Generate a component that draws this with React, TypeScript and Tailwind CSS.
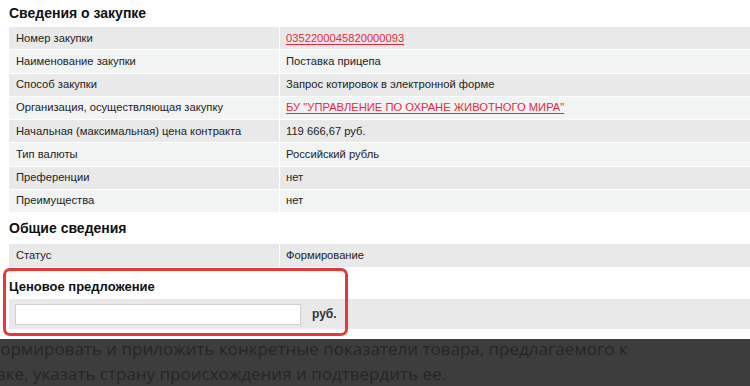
import React from "react";

const rows: { k: string; v: string; link?: boolean }[] = [
  { k: "Номер закупки", v: "0352200045820000093", link: true },
  { k: "Наименование закупки", v: "Поставка прицепа" },
  { k: "Способ закупки", v: "Запрос котировок в электронной форме" },
  { k: "Организация, осуществляющая закупку", v: "БУ \"УПРАВЛЕНИЕ ПО ОХРАНЕ ЖИВОТНОГО МИРА\"", link: true },
  { k: "Начальная (максимальная) цена контракта", v: "119 666,67 руб." },
  { k: "Тип валюты", v: "Российский рубль" },
  { k: "Преференции", v: "нет" },
  { k: "Преимущества", v: "нет" },
];

function Row({ k, v, link, i }: { k: string; v: string; link?: boolean; i: number }) {
  const bg = i % 2 === 0 ? "bg-[#e9e9e9]" : "bg-[#f2f3f3]";
  return (
    <div className="flex h-[22.25px] gap-px">
      <div className={`w-[270px] shrink-0 ${bg} flex items-center pl-[7px] text-[11.2px] text-[#222]`}>{k}</div>
      <div className={`flex-1 ${bg} flex items-center pl-[6px] text-[11.2px] text-[#222]`}>
        {link ? <span className="text-[#e8283c] underline underline-offset-2 decoration-[#e8283c]">{v}</span> : v}
      </div>
    </div>
  );
}

export default function App() {
  return (
    <div className="relative w-[750px] h-[386px] overflow-hidden bg-white" style={{ fontFamily: "'Liberation Sans', Arial, sans-serif" }}>
      <div className="pl-[9px]">
        <h2 className="h-[27px] pt-[3px] text-[14px] font-bold text-[#111]">Сведения о закупке</h2>
        <div className="flex flex-col gap-px">
          {rows.map((r, i) => (
            <Row key={i} {...r} i={i} />
          ))}
        </div>
        <h2 className="h-[32px] flex items-center text-[14px] font-bold text-[#111]">Общие сведения</h2>
        <div className="flex h-[23px] gap-px">
          <div className="w-[270px] shrink-0 bg-[#e9e9e9] flex items-center pl-[7px] text-[11.2px] text-[#222]">Статус</div>
          <div className="flex-1 bg-[#e9e9e9] flex items-center pl-[6px] text-[11.2px] text-[#222]">Формирование</div>
        </div>
        <h2 className="h-[32px] pt-[8px] flex items-center text-[13px] font-bold text-[#111]">Ценовое предложение</h2>
        <div className="flex h-[30px] items-center bg-[#e9e9e9] pl-[6px]">
          <div className="w-[286px] h-[21px] bg-white border border-[#cfcfcf]" />
          <span className="ml-[11px] text-[12px] font-bold text-[#333]">руб.</span>
        </div>
      </div>
      <div className="absolute left-[3px] top-[268px] w-[345px] h-[68px] rounded-[7px] border-[3.5px] border-[#e53935]" />
      <div className="absolute left-0 right-0 top-[339px] bottom-0 bg-[#3d3d3d] overflow-hidden">
        <div className="-ml-[12px] -mt-[3px] text-[17px] leading-[25px] text-[#262626] whitespace-nowrap" style={{ fontFamily: "'Open Sans', sans-serif" }}>
          <div>формировать и приложить конкретные показатели товара, предлагаемого к</div>
          <div className="-ml-[19px]">заявке, указать страну происхождения и подтвердить ее.</div>
        </div>
      </div>
    </div>
  );
}
